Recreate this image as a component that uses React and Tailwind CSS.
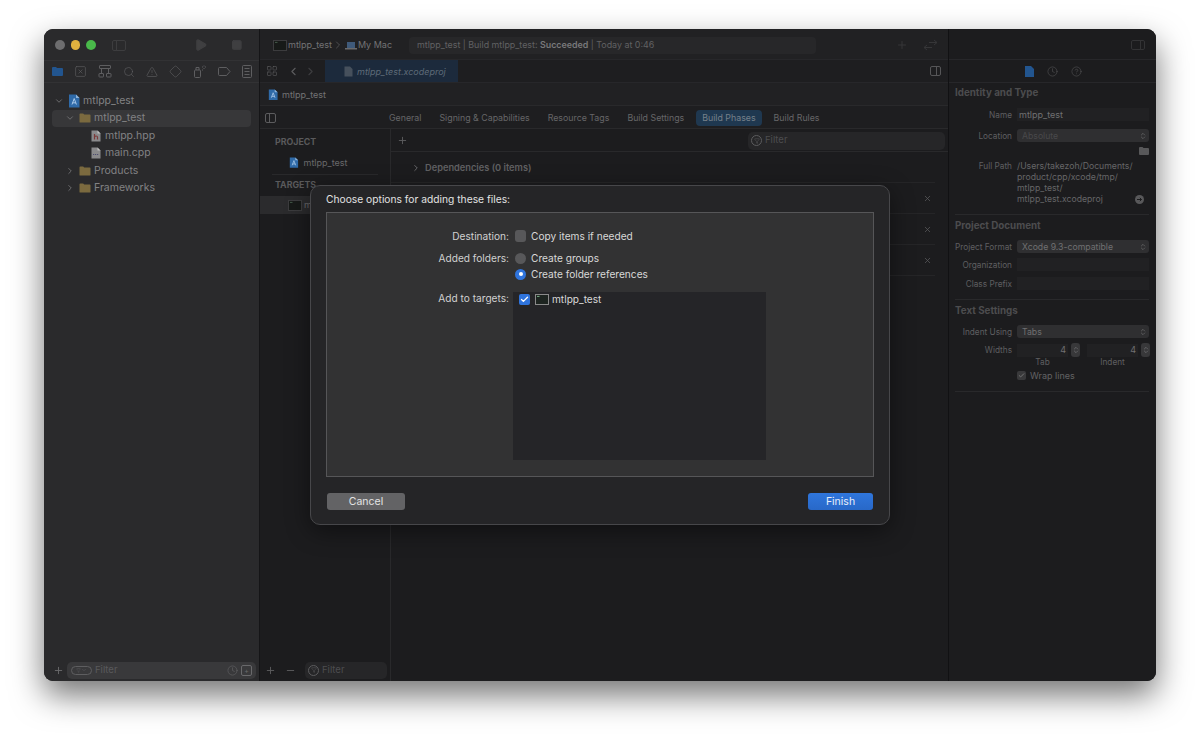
import React from 'react';
import {
  Check, ChevronDown, ChevronLeft, ChevronRight, ChevronsUpDown, CircleHelp, Clock,
  Diamond, Filter, LayoutGrid, Minus, Play, Plus, Search, Square, SquareX, TriangleAlert, X,
} from 'lucide-react';

const font = { fontFamily: 'Inter, "Liberation Sans", sans-serif' };

function ProjectIcon({ size = 12 }) {
  return (
    <svg width={size} height={size * 1.17} viewBox="0 0 12 14" className="shrink-0">
      <path d="M1 0.5H8L11.5 4V13.5H1Z" fill="#2f6aa8" />
      <path d="M8 0.5V4H11.5Z" fill="#8fb4da" />
      <path d="M6.2 4.5L4 10.5M6.2 4.5L8.4 10.5M4.6 8.8H7.8" stroke="#a9c8e8" strokeWidth="1" fill="none" />
    </svg>
  );
}

function FolderIcon() {
  return (
    <svg width="12" height="10" viewBox="0 0 12 10" className="shrink-0">
      <path d="M0.5 1.3Q0.5 0.5 1.3 0.5H4.2L5.2 1.6H10.8Q11.5 1.6 11.5 2.3V9Q11.5 9.6 10.8 9.6H1.2Q0.5 9.6 0.5 9Z" fill="#7b6a3f" />
    </svg>
  );
}

function FileIcon({ letter, color }) {
  return (
    <svg width="10" height="12" viewBox="0 0 10 12" className="shrink-0">
      <path d="M0.5 0.5H6.5L9.5 3.5V11.5H0.5Z" fill="#8a8a8c" />
      <path d="M6.5 0.5V3.5H9.5Z" fill="#c0c0c0" />
      {letter === 'h' ? (
        <path d="M3.5 4V9.5M3.5 7Q4 6 5.2 6Q6.5 6 6.5 7.2V9.5" stroke={color} strokeWidth="1.2" fill="none" />
      ) : (
        <path d="M2 7.5H8" stroke={color} strokeWidth="1.2" strokeDasharray="1.2 0.8" fill="none" />
      )}
    </svg>
  );
}

function TerminalIcon({ light }) {
  return (
    <svg width="14" height="11" viewBox="0 0 14 11" className="shrink-0">
      <rect x="0.5" y="0.5" width="13" height="10" fill={light ? '#1d2420' : '#171a18'} stroke={light ? '#8a8a8a' : '#3c3c3e'} />
      <path d="M2 2.4H4.5" stroke={light ? '#8fd0a0' : '#4f6a55'} strokeWidth="0.8" />
    </svg>
  );
}

function HierarchyIcon() {
  return (
    <svg width="14" height="13" viewBox="0 0 14 13" fill="none" stroke="#5e5e60" strokeWidth="1" className="shrink-0">
      <rect x="1.5" y="0.5" width="11" height="3" rx="0.5" />
      <path d="M3.5 3.5V8.5M10.5 3.5V8.5" />
      <rect x="1" y="8.5" width="4.5" height="3.5" rx="0.5" />
      <rect x="8.5" y="8.5" width="4.5" height="3.5" rx="0.5" />
    </svg>
  );
}

function SprayIcon() {
  return (
    <svg width="14" height="13" viewBox="0 0 14 13" fill="none" stroke="#5e5e60" strokeWidth="1" className="shrink-0">
      <rect x="1.5" y="5" width="6" height="7.5" rx="1" />
      <path d="M3 5V2.5H6V5M9 2H10M11 0.5V1.5M11 3V4M9 5H10M12 2H13" />
    </svg>
  );
}

function TagIcon() {
  return (
    <svg width="13" height="9" viewBox="0 0 13 9" fill="none" stroke="#5e5e60" strokeWidth="1" className="shrink-0">
      <path d="M1.5 0.5H8.5L12 4.5L8.5 8.5H1.5Q0.5 8.5 0.5 7.5V1.5Q0.5 0.5 1.5 0.5Z" />
    </svg>
  );
}

function ReportIcon() {
  return (
    <svg width="10" height="13" viewBox="0 0 10 13" fill="none" stroke="#5e5e60" strokeWidth="1" className="shrink-0">
      <rect x="0.5" y="0.5" width="9" height="12" rx="1" />
      <path d="M2.5 3.5H7.5M2.5 6.5H7.5M2.5 9.5H7.5" />
    </svg>
  );
}

function ReturnArrows() {
  return (
    <svg width="15" height="12" viewBox="0 0 15 12" fill="none" stroke="#363638" strokeWidth="1" className="shrink-0">
      <path d="M6 3.5H14M11 1L14 3.5L11 6M1 8.5H9M4 6L1 8.5L4 11" />
    </svg>
  );
}

function PanelIcon({ width = 14, height = 11, color = '#3d3d3f', side = 'left' }) {
  return (
    <svg width={width} height={height} viewBox={`0 0 ${width} ${height}`} fill="none" stroke={color} strokeWidth="1" className="shrink-0">
      <rect x="0.5" y="0.5" width={width - 1} height={height - 1} rx="1.5" />
      <path d={side === 'left' ? `M4.5 0.5V${height - 0.5}` : `M${width - 4.5} 0.5V${height - 0.5}`} />
    </svg>
  );
}

function FilterCircle({ color = '#5c5c5e' }) {
  return (
    <span className="flex h-[11px] w-[11px] shrink-0 items-center justify-center rounded-full border" style={{ borderColor: color }}>
      <Filter size={6} strokeWidth={2} color={color} />
    </span>
  );
}

function TreeRow({ indent, arrow, icon, label, active }) {
  return (
    <div className={`flex h-[17.5px] items-center rounded-[4px] ${active ? 'bg-[#373739]' : ''}`} style={{ paddingLeft: indent }}>
      <span className="flex w-[11px] shrink-0 items-center">
        {arrow === 'down' && <ChevronDown size={10} color="#77777a" />}
        {arrow === 'right' && <ChevronRight size={10} color="#77777a" />}
      </span>
      <span className="flex w-[18px] shrink-0 items-center justify-center">{icon}</span>
      <span className="text-[10.5px] text-[#828284]">{label}</span>
    </div>
  );
}

function Sidebar() {
  return (
    <div className="flex w-[216px] shrink-0 flex-col border-r border-[#151517] bg-[#2a2a2c]">
      <div className="flex h-[31px] shrink-0 items-center pl-[11px] pr-[16px] pt-[1px]">
        <span className="h-[10px] w-[10px] rounded-full bg-[#6d6d6f]" />
        <span className="ml-[6px] h-[10px] w-[10px] rounded-full bg-[#e0b13f]" />
        <span className="ml-[6px] h-[10px] w-[10px] rounded-full bg-[#49b94a]" />
        <span className="ml-[16px]"><PanelIcon /></span>
        <Play size={14} fill="#3f3f41" color="#3f3f41" className="ml-[68px]" />
        <Square size={12} fill="#3f3f41" color="#3f3f41" className="ml-[24px]" />
      </div>
      <div className="flex h-[23px] shrink-0 items-center justify-between border-y border-[#323234] pl-[8px] pr-[7px]">
        <svg width="11" height="9" viewBox="0 0 11 9"><path d="M0 1Q0 0 1 0H4L5 1H10Q11 1 11 2V8Q11 9 10 9H1Q0 9 0 8Z" fill="#22558f" /></svg>
        <SquareX size={13} color="#5e5e60" strokeWidth={1.2} />
        <HierarchyIcon />
        <Search size={12} color="#5e5e60" strokeWidth={1.3} />
        <TriangleAlert size={12} color="#5e5e60" strokeWidth={1.3} />
        <Diamond size={13} color="#5e5e60" strokeWidth={1.2} />
        <SprayIcon />
        <TagIcon />
        <ReportIcon />
      </div>
      <div className="flex flex-1 flex-col px-[8px] pt-[9px]">
        <TreeRow indent={2} arrow="down" icon={<ProjectIcon />} label="mtlpp_test" />
        <TreeRow indent={13} arrow="down" icon={<FolderIcon />} label="mtlpp_test" active />
        <TreeRow indent={24} icon={<FileIcon letter="h" color="#7c3a3a" />} label="mtlpp.hpp" />
        <TreeRow indent={24} icon={<FileIcon letter="c" color="#4e4e70" />} label="main.cpp" />
        <TreeRow indent={13} arrow="right" icon={<FolderIcon />} label="Products" />
        <TreeRow indent={13} arrow="right" icon={<FolderIcon />} label="Frameworks" />
      </div>
      <div className="flex h-[24px] shrink-0 items-center pl-[9px] pr-[3px] pt-[2px]">
        <Plus size={11} color="#6a6a6c" />
        <div className="ml-[3px] flex h-[17px] flex-1 items-center rounded-[5px] bg-[#39393b] pl-[4px] pr-[4px]">
          <span className="flex h-[9px] w-[21px] items-center justify-center rounded-full border border-[#5e5e60]">
            <Filter size={5} color="#5e5e60" />
            <ChevronDown size={6} color="#5e5e60" />
          </span>
          <span className="ml-[3px] flex-1 text-[9.5px] text-[#59595b]">Filter</span>
          <Clock size={11} color="#69696b" strokeWidth={1.2} />
          <span className="ml-[3px] flex h-[11px] w-[11px] items-center justify-center rounded-[2px] border border-[#69696b] text-[7px] leading-none text-[#69696b]">+</span>
        </div>
      </div>
    </div>
  );
}

function CenterToolbar() {
  return (
    <div className="flex h-[31px] shrink-0 items-center border-b border-[#27272a] bg-[#212123] pl-[13px] pt-[2px]">
      <TerminalIcon />
      <span className="ml-[1px] text-[9px] text-[#737375]">mtlpp_test</span>
      <ChevronRight size={12} color="#6a6a6c" strokeWidth={1.2} />
      <svg width="12" height="9" viewBox="0 0 12 9" className="ml-[1px]"><rect x="2" y="1" width="8" height="6" fill="#3f5a7a" /><rect x="0" y="7" width="12" height="1.5" fill="#6a6a6c" /></svg>
      <span className="ml-[1px] text-[9px] text-[#737375]">My Mac</span>
      <div className="ml-[17px] flex h-[17px] w-[407px] items-center rounded-[4px] bg-[#272729] pl-[8px] text-[8.9px] text-[#616163]">
        <span>mtlpp_test | Build mtlpp_test: <b className="font-semibold text-[#78787a]">Succeeded</b> | Today at 0:46</span>
      </div>
      <Plus size={12} color="#363638" className="ml-[80px]" />
      <span className="ml-[15px]"><ReturnArrows /></span>
    </div>
  );
}

function TabBar() {
  return (
    <div className="flex h-[23px] shrink-0 items-center border-b border-[#27272a] bg-[#1e1e20] pl-[6px] pr-[7px]">
      <LayoutGrid size={12} color="#5c5c5e" strokeWidth={1.2} />
      <ChevronLeft size={13} color="#5c5c5e" className="ml-[9px]" />
      <ChevronRight size={13} color="#3d3d3f" className="ml-[4px]" />
      <div className="ml-[8px] flex h-full w-[133px] items-center bg-[#1c2a3c] pl-[19px] pt-[1px]">
        <ProjectIconDim />
        <span className="ml-[4px] text-[9px] italic text-[#5e6a78]">mtlpp_test.xcodeproj</span>
      </div>
      <span className="ml-auto"><PanelIcon width={11} height={10} color="#565658" side="right" /></span>
    </div>
  );
}

function ProjectIconDim() {
  return (
    <svg width="9" height="11" viewBox="0 0 9 11" className="shrink-0">
      <path d="M0.5 0.5H6L8.5 3V10.5H0.5Z" fill="#46505c" />
    </svg>
  );
}

function SettingsTabs() {
  const tabs = ['General', 'Signing & Capabilities', 'Resource Tags', 'Build Settings', 'Build Phases', 'Build Rules'];
  return (
    <div className="flex h-[23px] shrink-0 items-center border-b border-[#29292b] bg-[#1e1e20] pl-[5px] pt-[1px]">
      <PanelIcon width={11} height={10} color="#5c5c5e" />
      <div className="ml-[107px] flex items-center gap-[6px]">
        {tabs.map((tab) => (
          <span
            key={tab}
            className={`flex h-[16px] items-center rounded-[4px] px-[6px] text-[8.82px] ${tab === 'Build Phases' ? 'bg-[#1f3850] text-[#76808a]' : 'text-[#666668]'}`}
          >
            {tab}
          </span>
        ))}
      </div>
    </div>
  );
}

function TargetsColumn() {
  return (
    <div className="flex w-[131px] shrink-0 flex-col border-r border-[#29292b] bg-[#1c1c1e]">
      <div className="pl-[15px] pt-[6px] text-[8.8px] font-bold leading-[13.5px] text-[#5a5a5c]">PROJECT</div>
      <div className="mx-[12px] mt-[4px] flex h-[22px] items-center border-b border-[#29292b] pl-[17px]">
        <ProjectIcon size={9.5} />
        <span className="ml-[5px] text-[9px] text-[#69696b]">mtlpp_test</span>
      </div>
      <div className="pl-[15px] pt-[3px] text-[8.8px] font-bold leading-[13.5px] text-[#5a5a5c]">TARGETS</div>
      <div className="mt-[5px] flex h-[18px] items-center bg-[#2b2b2d] pl-[28px]">
        <TerminalIcon />
        <span className="ml-[2px] text-[9px] text-[#69696b]">mtlpp_test</span>
      </div>
      <div className="mt-auto flex h-[24px] items-center pl-[5px] pt-[2px]">
        <Plus size={11} color="#5c5c5e" />
        <Minus size={11} color="#5c5c5e" className="ml-[9px]" />
        <div className="ml-[9px] flex h-[17px] w-[82px] items-center rounded-[5px] bg-[#262628] pl-[3px]">
          <FilterCircle />
          <span className="ml-[3px] text-[9.5px] text-[#4d4d4f]">Filter</span>
        </div>
      </div>
    </div>
  );
}

function PhasesPanel() {
  return (
    <div className="flex flex-1 flex-col bg-[#1c1c1e]">
      <div className="flex h-[23px] shrink-0 items-center border-b border-[#29292b] pl-[6px] pr-[3px] pt-[1px]">
        <Plus size={11} color="#5c5c5e" />
        <div className="ml-auto flex h-[18px] w-[197px] items-center rounded-[5px] bg-[#262628] pl-[3px]">
          <FilterCircle />
          <span className="ml-[3px] text-[9.5px] text-[#4d4d4f]">Filter</span>
        </div>
      </div>
      <div className="mr-[13px] flex h-[31px] shrink-0 items-center border-b border-[#252527] pl-[20px] pt-[1px]">
        <ChevronRight size={10} color="#69696b" strokeWidth={2.4} />
        <span className="ml-[4px] text-[9.25px] font-semibold text-[#606062]">Dependencies (0 items)</span>
      </div>
      {[0, 1, 2].map((row) => (
        <div key={row} className="mr-[13px] flex h-[31px] shrink-0 items-center justify-end border-b border-[#252527] pr-[3px]">
          <X size={9} color="#5a5a5c" strokeWidth={2} />
        </div>
      ))}
    </div>
  );
}

function Center() {
  return (
    <div className="flex min-w-0 flex-1 flex-col">
      <CenterToolbar />
      <TabBar />
      <div className="flex h-[23px] shrink-0 items-center border-b border-[#29292b] bg-[#212123] pl-[8px] pt-[1px]">
        <ProjectIcon size={10} />
        <span className="ml-[4px] text-[9px] text-[#737375]">mtlpp_test</span>
      </div>
      <SettingsTabs />
      <div className="flex min-h-0 flex-1">
        <TargetsColumn />
        <PhasesPanel />
      </div>
    </div>
  );
}

function InspectorRow({ label, children, className = '' }) {
  return (
    <div className={`flex ${className}`}>
      <span className="h-[13px] w-[57px] shrink-0 text-right text-[8.25px] leading-[14px] text-[#5f5f61]">{label}</span>
      <div className="ml-[5px] min-w-0 flex-1">{children}</div>
    </div>
  );
}

function Field({ value }) {
  return <div className="flex h-[13px] items-center bg-[#212123] pl-[2px] text-[9px] text-[#707072]">{value}</div>;
}

function Select({ value, dim }) {
  return (
    <div className="flex h-[13px] items-center justify-between rounded-[3px] bg-[#2f2f31] pl-[5px] pr-[2px] pt-[1px]">
      <span className={`text-[8.7px] leading-[12px] ${dim ? 'text-[#49494b]' : 'text-[#6f6f71]'}`}>{value}</span>
      <ChevronsUpDown size={8} color="#6f6f71" />
    </div>
  );
}

function Stepper({ value, label }) {
  return (
    <div className="flex w-[63px] flex-col">
      <div className="flex items-center">
        <div className="flex h-[13px] w-[51px] items-center justify-end bg-[#212123] pr-[2px] text-[9px] text-[#707072]">{value}</div>
        <span className="ml-[3px] flex h-[14px] w-[9px] items-center justify-center rounded-[3px] bg-[#38383a]">
          <ChevronsUpDown size={8} color="#77777a" />
        </span>
      </div>
      <span className="w-[51px] text-center text-[8.25px] leading-[10px] text-[#5f5f61]">{label}</span>
    </div>
  );
}

function Section({ title, children, className = '' }) {
  return (
    <div className={`ml-[6px] mr-[7px] shrink-0 border-b border-[#29292b] ${className}`}>
      <div className="text-[9.8px] font-bold leading-[14px] text-[#4c4c4e]">{title}</div>
      {children}
    </div>
  );
}

function Inspector() {
  return (
    <div className="flex w-[208px] shrink-0 flex-col border-l border-[#111113] bg-[#1c1c1e]">
      <div className="flex h-[31px] shrink-0 items-center justify-end border-b border-[#27272a] pr-[11px] pt-[2px]">
        <PanelIcon width={14} height={10} color="#333335" side="right" />
      </div>
      <div className="flex h-[23px] shrink-0 items-center border-b border-[#27272a] pl-[76px] pt-[1px]">
        <svg width="9" height="11" viewBox="0 0 9 11"><path d="M0 0H6L9 3V11H0Z" fill="#22558f" /></svg>
        <Clock size={11} color="#58585a" strokeWidth={1.2} className="ml-[13px]" />
        <CircleHelp size={11} color="#58585a" strokeWidth={1.2} className="ml-[13px]" />
      </div>
      <Section title="Identity and Type" className="h-[132px] pt-[3px]">
        <InspectorRow label="Name" className="mt-[8px]"><Field value="mtlpp_test" /></InspectorRow>
        <InspectorRow label="Location" className="mt-[8px]"><Select value="Absolute" dim /></InspectorRow>
        <div className="mt-[5px] flex h-[8px] justify-end">
          <svg width="10" height="8" viewBox="0 0 10 8"><path d="M0 1Q0 0 1 0H3.5L4.5 1H9Q10 1 10 2V7Q10 8 9 8H1Q0 8 0 7Z" fill="#58585a" /></svg>
        </div>
        <div className="mt-[6px] flex items-start">
          <span className="w-[57px] shrink-0 text-right text-[8.25px] leading-[11px] text-[#5f5f61]">Full Path</span>
          <div className="ml-[5px] flex-1 text-[8.7px] leading-[11px] text-[#666668]">
            <div>/Users/takezoh/Documents/</div>
            <div>product/cpp/xcode/tmp/</div>
            <div>mtlpp_test/</div>
            <div className="flex items-center justify-between pr-[5px]">
              mtlpp_test.xcodeproj
              <svg width="9" height="9" viewBox="0 0 9 9" className="shrink-0">
                <circle cx="4.5" cy="4.5" r="4.5" fill="#58585a" />
                <path d="M2 4.5H6.5M4.8 2.8L6.5 4.5L4.8 6.2" stroke="#1c1c1e" strokeWidth="1" fill="none" />
              </svg>
            </div>
          </div>
        </div>
      </Section>
      <Section title="Project Document" className="h-[85px] pt-[4px]">
        <InspectorRow label="Project Format" className="mt-[7px]"><Select value="Xcode 9.3-compatible" /></InspectorRow>
        <InspectorRow label="Organization" className="mt-[5px]"><Field value="" /></InspectorRow>
        <InspectorRow label="Class Prefix" className="mt-[6px]"><Field value="" /></InspectorRow>
      </Section>
      <Section title="Text Settings" className="h-[92px] pt-[4px]">
        <InspectorRow label="Indent Using" className="mt-[7px]"><Select value="Tabs" /></InspectorRow>
        <InspectorRow label="Widths" className="mt-[5px]">
          <div className="flex gap-[7px]">
            <Stepper value="4" label="Tab" />
            <Stepper value="4" label="Indent" />
          </div>
        </InspectorRow>
        <div className="mt-[2px] flex items-center pl-[62px]">
          <span className="flex h-[9px] w-[9px] items-center justify-center rounded-[2px] bg-[#39393b]">
            <Check size={7} color="#7a7a7c" strokeWidth={3} />
          </span>
          <span className="ml-[4px] text-[9px] text-[#626264]">Wrap lines</span>
        </div>
      </Section>
    </div>
  );
}

function Sheet() {
  return (
    <div className="absolute left-[266px] top-[156px] flex h-[340px] w-[580px] flex-col rounded-[10px] border border-[#47474a] bg-[#252527] px-[15px] pt-[7px] shadow-[0_6px_24px_rgba(0,0,0,0.45)]">
      <div className="text-[10.25px] leading-[13px] text-[#e2e2e2]">Choose options for adding these files:</div>
      <div className="mt-[6px] h-[265px] border border-[#565658] bg-[#323233]">
        <div className="grid grid-cols-[182px_1fr] pt-[15px] text-[10.15px] leading-[16px]">
          <span className="text-right text-[#d0d0d0]">Destination:</span>
          <div className="flex items-center pl-[6px]">
            <span className="h-[12px] w-[11px] rounded-[3px] bg-[#58585a]" />
            <span className="ml-[5px] text-[#d8d8d8]">Copy items if needed</span>
          </div>
          <span className="mt-[6px] text-right text-[#d0d0d0]">Added folders:</span>
          <div className="mt-[6px] flex items-center pl-[6px]">
            <span className="h-[11px] w-[11px] rounded-full bg-[#58585a]" />
            <span className="ml-[5px] text-[#d8d8d8]">Create groups</span>
          </div>
          <span />
          <div className="flex items-center pl-[6px]">
            <span className="flex h-[11px] w-[11px] items-center justify-center rounded-full bg-[#2f74dd]">
              <span className="h-[4px] w-[4px] rounded-full bg-white" />
            </span>
            <span className="ml-[5px] text-[#d8d8d8]">Create folder references</span>
          </div>
          <span className="mt-[8px] text-right text-[#d0d0d0]">Add to targets:</span>
          <div className="mt-[10px] pl-[4px]">
            <div className="flex h-[168px] w-[253px] items-start bg-[#252528] pl-[6px]">
              <span className="mt-[2px] flex h-[11px] w-[11px] items-center justify-center rounded-[2px] bg-[#2f74dd]">
                <Check size={9} color="#ffffff" strokeWidth={3.5} />
              </span>
              <span className="ml-[5px] mt-[2px]"><TerminalIcon light /></span>
              <span className="-mt-[1px] ml-[3px] text-[#d8d8d8]">mtlpp_test</span>
            </div>
          </div>
        </div>
      </div>
      <div className="mt-[16px] flex items-center justify-between pl-[1px] pr-[1px]">
        <button className="h-[17px] w-[78px] rounded-[3px] bg-[#636365] text-[10.5px] text-[#e4e4e4]">Cancel</button>
        <button className="h-[17px] w-[65px] rounded-[3px] bg-gradient-to-b from-[#2f76dc] to-[#2868c8] text-[10.5px] text-[#e8eefa]">Finish</button>
      </div>
    </div>
  );
}

export default function App() {
  return (
    <div className="h-[740px] w-[1200px] overflow-hidden bg-white pl-[44px] pt-[29px]" style={font}>
      <div className="relative flex h-[652px] w-[1112px] rounded-[9px] bg-[#1c1c1e] shadow-[0_14px_32px_rgba(0,0,0,0.55)]">
        <div className="flex w-full overflow-hidden rounded-[9px]">
          <Sidebar />
          <Center />
          <Inspector />
        </div>
        <Sheet />
      </div>
    </div>
  );
}
